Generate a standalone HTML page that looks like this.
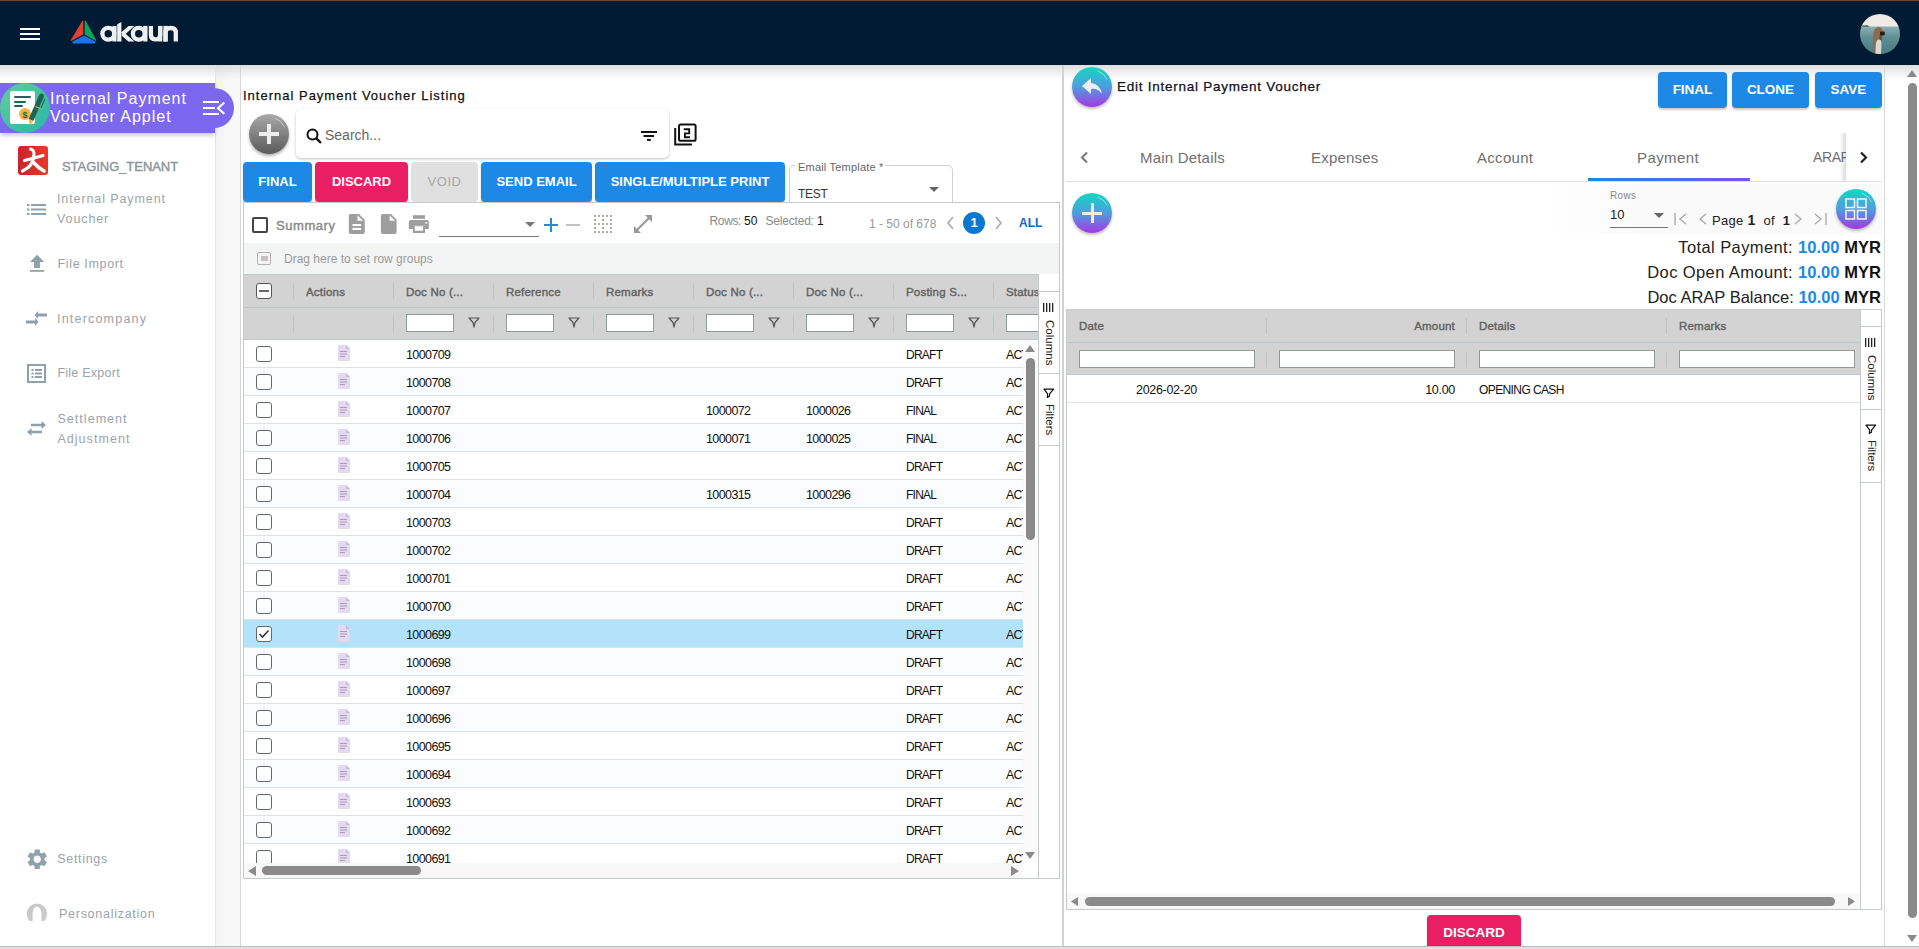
<!DOCTYPE html><html><head><meta charset="utf-8"><style>
*{box-sizing:border-box;margin:0;padding:0}
html,body{width:1919px;height:949px;overflow:hidden;background:#fff;font-family:"Liberation Sans",sans-serif;position:relative}
.a{position:absolute}
.t{position:absolute;white-space:nowrap;line-height:1}
#hdr{left:0;top:0;width:1919px;height:65px;background:#011b34;border-top:1px solid #5e4a3e}
.btn{position:absolute;color:#fff;font-weight:bold;font-size:13px;text-align:center;border-radius:4px;box-shadow:0 2px 2px rgba(0,0,0,.2)}
.blue{background:#1e88e5}
.pink{background:#e91e63}
.side{color:#98a4aa;font-size:12.5px;letter-spacing:0.85px}
.hcell{position:absolute;top:0;height:33px;font-size:12px;font-weight:bold;color:#636363;line-height:33px;padding-left:13px;white-space:nowrap;overflow:hidden}
.sep{position:absolute;width:1px;background:#c3c3c3}
.finp{position:absolute;height:18px;background:#fff;border:1px solid #8f9a9a}
.cell{position:absolute;font-size:12px;color:#000;white-space:nowrap}
.cb{position:absolute;width:16px;height:16px;border:1.5px solid #5f6b6b;border-radius:3px;background:#fff}
</style></head><body><div id="hdr" class="a"></div>
<div class="a" style="left:20px;top:28px;width:20px;height:2px;background:#fff"></div>
<div class="a" style="left:20px;top:33px;width:20px;height:2px;background:#fff"></div>
<div class="a" style="left:20px;top:38px;width:20px;height:2px;background:#fff"></div>
<svg class="a" style="left:0;top:0" width="200" height="60" viewBox="0 0 200 60"><path d="M82.2 21 Q83 20 83.3 21.5 L83.3 34.6 L71.2 41 Q70.2 41.2 70.8 40 Z" fill="#de4131"/><path d="M84.6 21.5 Q85 20 85.8 21 L96.2 40 Q96.6 41 95.6 40.8 L84.6 34.6 Z" fill="#0ea35a"/><path d="M84 35.5 L95.4 41.6 Q96 42.6 94.8 43.4 L73 43.4 Q71.6 42.6 72.6 41.6 Z" fill="#1c72ec"/><g fill="#f0f0f0"><circle cx="108.3" cy="33.8" r="5.9" fill="none" stroke="#f0f0f0" stroke-width="4.3"/><rect x="112.4" y="25.9" width="4.2" height="15.6"/><path d="M117.2 24.3 L121.4 21.9 L121.4 41.5 L117.2 41.5Z"/><path d="M121 32.6 L128.6 25.9 L134.4 25.9 L124 35.6 Z"/><path d="M123.8 32.2 L134.4 41.5 L128.4 41.5 L121.2 35.2 Z"/><circle cx="138.8" cy="33.8" r="5.9" fill="none" stroke="#f0f0f0" stroke-width="4.3"/><rect x="143.2" y="25.9" width="4.3" height="15.6"/><path d="M150.9 25.9 V34.8 Q150.9 39.4 155.4 39.4 Q160 39.4 160.2 34.8 V25.9" fill="none" stroke="#f0f0f0" stroke-width="4.3"/><rect x="158" y="25.9" width="4.3" height="15.6"/><rect x="163.4" y="25.9" width="4.3" height="15.6"/><path d="M165.5 41.5 V32.6 Q165.5 28 170.8 28 Q175.8 28 175.8 32.6 V41.5" fill="none" stroke="#f0f0f0" stroke-width="4.3"/></g></svg>
<svg class="a" style="left:1860px;top:14px" width="40" height="40" viewBox="0 0 40 40"><defs><clipPath id="av"><circle cx="20" cy="20" r="20"/></clipPath><linearGradient id="sea" x1="0" y1="0" x2="0" y2="1"><stop offset="0" stop-color="#8fb0b3"/><stop offset="0.4" stop-color="#5f8e94"/><stop offset="1" stop-color="#4a7b82"/></linearGradient></defs><g clip-path="url(#av)"><rect x="0" y="0" width="40" height="13" fill="#efebe6"/><rect x="0" y="12.5" width="40" height="28" fill="url(#sea)"/><path d="M1 12.8 L3 11.2 L5 11.5 L7 10.9 L9.5 12.8Z" fill="#3d5b4a"/><path d="M14 40 L13.2 30 Q12.5 22 14 17 Q15.5 12.8 19 13 Q22.5 13.6 22.6 17.5 L22 26 L19 40Z" fill="#8d6c4c"/><path d="M15.5 40 L15.8 30 Q16.5 25.5 19.5 25 Q21.5 26 21.5 31 L21 40Z" fill="#dcd8d2"/><rect x="20" y="17.5" width="4.8" height="4" rx="1" fill="#222"/><path d="M19.5 21 L21.5 21 L21.5 26 L19.5 26Z" fill="#5d4b3c"/></g></svg>
<div class="a" style="left:0;top:65px;width:1919px;height:14px;background:linear-gradient(rgba(0,0,0,.13),rgba(0,0,0,0))"></div>
<div class="a" style="left:215px;top:65px;width:1px;height:884px;background:#e4e4e4"></div>
<div class="a" style="left:216px;top:65px;width:24px;height:884px;background:linear-gradient(90deg,#f4f4f4,#fafafa)"></div>
<div class="a" style="left:240px;top:65px;width:1px;height:884px;background:#d6d6d6"></div>
<div class="a" style="left:216px;top:65px;width:24px;height:14px;background:linear-gradient(rgba(0,0,0,.1),rgba(0,0,0,0))"></div>
<div class="a" style="left:0;top:83px;width:215px;height:50px;background:#7b68ee;box-shadow:0 3px 4px rgba(0,0,0,.18)"></div>
<div class="a" style="left:194px;top:88px;width:40px;height:40px;border-radius:50%;background:#7b68ee"></div>
<div class="a" style="left:203px;top:101.3px;width:16px;height:2.1px;background:#fff"></div>
<div class="a" style="left:203px;top:107.2px;width:12px;height:2.1px;background:#fff"></div>
<div class="a" style="left:203px;top:113px;width:16px;height:2.1px;background:#fff"></div>
<svg class="a" style="left:216px;top:101px" width="10" height="14"><path d="M8.3 1.5 L2 7.2 L8.3 12.8" stroke="#fff" stroke-width="2.2" fill="none"/></svg>
<div class="a" style="left:0;top:83px;width:50px;height:50px;border-radius:50%;background:linear-gradient(135deg,#5fcf98,#2ab5a8)"></div>
<svg class="a" style="left:8px;top:91px" width="38" height="36" viewBox="0 0 38 36">
<rect x="2" y="0" width="25" height="33" rx="2" fill="#fff"/>
<rect x="6" y="5" width="17" height="2" rx="1" fill="#1d6356"/><rect x="6" y="10" width="12" height="2" rx="1" fill="#1d6356"/><rect x="6" y="14" width="9" height="2" rx="1" fill="#1d6356"/>
<circle cx="17" cy="23" r="6" fill="#f6b43c"/><text x="14.5" y="26.5" font-size="9" font-weight="bold" fill="#1d6356" font-family="Liberation Sans">$</text>
<path d="M31.2 4.06 L35.8 5.94 L25.3 29.94 L20.7 28.06 Z" fill="#1d6356"/><circle cx="33.5" cy="5" r="2.4" fill="#1d6356"/><path d="M20.7 28.06 L25.3 29.94 L21.8 34.5 Z" fill="#f6b43c"/><path d="M27.6 15 L32.2 16.9 L31.8 17.8 L27.2 15.9Z" fill="#f6b43c"/><path d="M36.5 7.5 L37.5 8 L33.5 17 L32.6 16.6Z" fill="#1d6356"/></svg>
<div class="t" style="left:50px;top:90px;font-size:16px;color:#fff;letter-spacing:1px;line-height:18px">Internal Payment<br>Voucher Applet</div>
<div class="a" style="left:18px;top:146px;width:30px;height:29px;border-radius:3px;background:linear-gradient(90deg,#c9232b,#e8392a)">
<svg width="30" height="29" viewBox="0 0 30 29" fill="none" stroke="#fff" stroke-linecap="round"><path d="M12.5 3 Q16.5 4 16 9" stroke-width="3"/><path d="M6.5 14.5 Q15 12.5 25 9.5" stroke-width="3.2"/><path d="M15.5 10 Q15.5 20 4.5 25" stroke-width="3.2"/><path d="M15.5 16.5 Q20 21.5 26 25" stroke-width="3.6"/></svg></div>
<div class="t" style="left:62px;top:160px;font-size:13px;color:#8a969a;letter-spacing:-0.05px;-webkit-text-stroke:0.4px #8a969a">STAGING_TENANT</div>
<svg class="a" style="left:27px;top:204px" width="20" height="11" viewBox="0 0 20 11">
<rect x="0" y="0" width="2.5" height="2" fill="#8fa1ab"/><rect x="4" y="0" width="15" height="2" fill="#8fa1ab"/>
<rect x="0" y="4.5" width="2.5" height="2" fill="#8fa1ab"/><rect x="4" y="4.5" width="15" height="2" fill="#8fa1ab"/>
<rect x="0" y="9" width="2.5" height="2" fill="#8fa1ab"/><rect x="4" y="9" width="15" height="2" fill="#8fa1ab"/></svg>
<div class="t side" style="left:57px;top:188.5px;line-height:20px;letter-spacing:0.9px">Internal Payment<br>Voucher</div>
<svg class="a" style="left:0;top:250px" width="50" height="25" viewBox="0 250 50 25"><path d="M37.1 254.8 L44.2 262 L40.1 262 L40.1 268 L34 268 L34 262 L30 262 Z" fill="#8fa1ab"/><rect x="30" y="270" width="14.2" height="1.8" fill="#8fa1ab"/></svg>
<div class="t side" style="left:57.5px;top:257.5px;letter-spacing:0.65px">File Import</div>
<svg class="a" style="left:26px;top:311px" width="21" height="15" viewBox="0 0 21 15">
<path d="M0 9.5 L9 9.5 L9 7 L12.5 11 L9 15 L9 12.5 L0 12.5Z" fill="#8fa1ab"/>
<path d="M21 2.5 L12 2.5 L12 0 L8.5 4 L12 8 L12 5.5 L21 5.5Z" fill="#8fa1ab"/></svg>
<div class="t side" style="left:57px;top:312.7px;letter-spacing:1.2px">Intercompany</div>
<svg class="a" style="left:27px;top:364px" width="19" height="19" viewBox="0 0 19 19">
<rect x="1" y="1" width="17" height="17" fill="none" stroke="#8fa1ab" stroke-width="2"/>
<rect x="4.5" y="5" width="2" height="2" fill="#8fa1ab"/><rect x="8" y="5" width="7" height="2" fill="#8fa1ab"/>
<rect x="4.5" y="8.5" width="2" height="2" fill="#8fa1ab"/><rect x="8" y="8.5" width="7" height="2" fill="#8fa1ab"/>
<rect x="4.5" y="12" width="2" height="2" fill="#8fa1ab"/><rect x="8" y="12" width="7" height="2" fill="#8fa1ab"/></svg>
<div class="t side" style="left:57.4px;top:367.4px;letter-spacing:0.25px">File Export</div>
<svg class="a" style="left:27px;top:421px" width="19" height="15" viewBox="0 0 19 15">
<path d="M19 4 L14.5 0 L14.5 2.8 L4 2.8 L4 5.2 L14.5 5.2 L14.5 8 Z" fill="#8fa1ab"/>
<path d="M0 11 L4.5 7 L4.5 9.8 L15 9.8 L15 12.2 L4.5 12.2 L4.5 15 Z" fill="#8fa1ab"/></svg>
<div class="t side" style="left:57.4px;top:408.7px;line-height:20px;letter-spacing:1.05px">Settlement<br>Adjustment</div>
<svg class="a" style="left:24.7px;top:846.8px" width="24.5" height="24.5" viewBox="0 0 24 24">
<path fill="#8fa1ab" d="M19.14 12.94c.04-.3.06-.61.06-.94 0-.32-.02-.64-.07-.94l2.03-1.58c.18-.14.23-.41.12-.61l-1.92-3.32c-.12-.22-.37-.29-.59-.22l-2.39.96c-.5-.38-1.03-.7-1.62-.94l-.36-2.54c-.04-.24-.24-.41-.48-.41h-3.84c-.24 0-.43.17-.47.41l-.36 2.54c-.59.24-1.13.57-1.62.94l-2.39-.96c-.22-.08-.47 0-.59.22L2.74 8.87c-.12.21-.08.47.12.61l2.03 1.58c-.05.3-.09.63-.09.94s.02.64.07.94l-2.03 1.58c-.18.14-.23.41-.12.61l1.92 3.32c.12.22.37.29.59.22l2.39-.96c.5.38 1.030.7 1.62.94l.36 2.54c.05.24.24.41.48.41h3.84c.24 0 .44-.17.47-.41l.36-2.54c.59-.24 1.13-.56 1.62-.94l2.39.96c.22.08.47 0 .59-.22l1.92-3.32c.12-.22.07-.47-.12-.61l-2.01-1.58zM12 15.6c-1.98 0-3.6-1.62-3.6-3.6s1.62-3.6 3.6-3.6 3.6 1.62 3.6 3.6-1.62 3.6-3.6 3.6z"/></svg>
<div class="t side" style="left:57.2px;top:852.7px;letter-spacing:0.7px">Settings</div>
<svg class="a" style="left:26px;top:902px" width="22" height="21" viewBox="0 0 22 21"><circle cx="10.9" cy="11.8" r="10.2" fill="#c9c9c9"/><ellipse cx="11" cy="12" rx="4.4" ry="7.5" fill="#fff"/><rect x="6.6" y="12" width="8.8" height="10" fill="#fff"/><rect x="0" y="19" width="22" height="3" fill="#fff"/></svg>
<div class="t side" style="left:59px;top:907.8px;letter-spacing:0.73px">Personalization</div>
<div class="t" style="left:243px;top:89px;font-size:13px;color:#111;letter-spacing:1px;-webkit-text-stroke:0.25px #111">Internal Payment Voucher Listing</div>
<div class="a" style="left:249px;top:114px;width:40px;height:40px;border-radius:50%;background:linear-gradient(#a9a9a9,#5a5a5a);box-shadow:0 2px 3px rgba(0,0,0,.3)"></div>
<svg class="a" style="left:249px;top:114px" width="40" height="40"><path d="M25.8 4 A17 17 0 0 1 35.4 12.8" fill="none" stroke="#d8d8d8" stroke-width="0.9" opacity="0.8"/></svg>
<div class="a" style="left:259px;top:132px;width:20px;height:4px;background:#eee"></div>
<div class="a" style="left:267px;top:124px;width:4px;height:20px;background:#eee"></div>
<div class="a" style="left:296px;top:109px;width:373px;height:49px;border-radius:5px;background:#fff;box-shadow:0 1px 3px rgba(0,0,0,.25)"></div>
<svg class="a" style="left:306px;top:128px" width="17" height="16" viewBox="0 0 17 16"><circle cx="6.5" cy="6.5" r="5" fill="none" stroke="#111" stroke-width="2"/><path d="M10.3 10.3 L15 15" stroke="#111" stroke-width="2.4"/></svg>
<div class="t" style="left:325px;top:128px;font-size:14px;color:#666">Search...</div>
<svg class="a" style="left:0;top:0" width="700" height="160" viewBox="0 0 700 160"><rect x="641" y="131" width="16" height="2" fill="#111"/><rect x="643.5" y="135" width="10.5" height="2" fill="#111"/><rect x="647" y="138.9" width="3.8" height="2" fill="#111"/><path d="M675.2 128 V144.5 H692" fill="none" stroke="#111" stroke-width="2"/><rect x="679" y="124.6" width="16.6" height="16.2" rx="1.6" fill="none" stroke="#111" stroke-width="2"/><path d="M683.8 129.2 H689.2 V133.4 H684.9 V137.3 H690" fill="none" stroke="#111" stroke-width="1.9"/></svg>
<div class="btn blue" style="left:243px;top:162px;width:69px;height:40px;line-height:40px">FINAL</div>
<div class="btn pink" style="left:315px;top:162px;width:93px;height:40px;line-height:40px">DISCARD</div>
<div class="btn" style="left:411px;top:162px;width:67px;height:40px;line-height:40px;background:#e0e0e0;color:#a8a8a8;font-weight:normal;letter-spacing:0.5px;box-shadow:none">VOID</div>
<div class="btn blue" style="left:481px;top:162px;width:111px;height:40px;line-height:40px">SEND EMAIL</div>
<div class="btn blue" style="left:595px;top:162px;width:190px;height:40px;line-height:40px">SINGLE/MULTIPLE PRINT</div>
<div class="a" style="left:789px;top:165px;width:164px;height:45px;border:1px solid #d0d0d0;border-radius:5px"></div>
<div class="a" style="left:795px;top:160px;width:90px;height:10px;background:#fff"></div>
<div class="t" style="left:798px;top:162px;font-size:11px;color:#666;letter-spacing:0.2px">Email Template *</div>
<div class="t" style="left:798px;top:188px;font-size:12px;color:#333;letter-spacing:-0.3px">TEST</div>
<svg class="a" style="left:929px;top:187px" width="10" height="5"><path d="M0 0 L10 0 L5 5Z" fill="#666"/></svg>
<div class="a" style="left:243px;top:202px;width:817px;height:677px;border:1px solid #c5cacd;background:#fff"></div>
<div class="a" style="left:252px;top:217px;width:16px;height:16px;border:2px solid #444;border-radius:2px"></div>
<div class="t" style="left:276px;top:219px;font-size:13px;color:#8c8c8c;letter-spacing:0.55px;-webkit-text-stroke:0.45px #8c8c8c">Summary</div>
<svg class="a" style="left:0;top:0" width="440" height="240" viewBox="0 0 440 240"><path d="M350.5 214 L359 214 L364.8 219.8 L364.8 232 Q364.8 234 362.8 234 L350.8 234 Q348.8 234 348.8 232 L348.8 216 Q348.8 214 350.5 214Z" fill="#9e9e9e"/><path d="M357.5 215.3 L357.5 220.8 L363 220.8Z" fill="#fff"/><rect x="352.5" y="224" width="8.6" height="2.1" fill="#fff"/><rect x="352.5" y="227.9" width="8.6" height="2.1" fill="#fff"/><path d="M382.6 214 L391 214 L396.6 219.8 L396.6 232 Q396.6 234 394.6 234 L382.9 234 Q380.9 234 380.9 232 L380.9 216 Q380.9 214 382.6 214Z" fill="#9e9e9e"/><path d="M389.6 215.3 L389.6 220.8 L395 220.8Z" fill="#fff"/><rect x="413" y="215.2" width="12" height="3.6" fill="#9e9e9e"/><path d="M410.8 220.1 L426.8 220.1 Q428.8 220.1 428.8 222.1 L428.8 229 L425 229 L425 225.8 L413 225.8 L413 229 L408.8 229 L408.8 222.1 Q408.8 220.1 410.8 220.1Z" fill="#9e9e9e"/><path d="M413 225.8 L425 225.8 L425 233 L413 233Z M414.8 226.2 L414.8 230.8 L423.1 230.8 L423.1 226.2Z" fill="#9e9e9e" fill-rule="evenodd"/><rect x="425.5" y="222" width="1.6" height="1.8" fill="#fff"/></svg>
<div class="a" style="left:439px;top:236px;width:100px;height:1px;background:#777"></div>
<svg class="a" style="left:525px;top:222px" width="10" height="5"><path d="M0 0 L10 0 L5 5Z" fill="#777"/></svg>
<div class="a" style="left:544px;top:224px;width:14px;height:2px;background:#1e88e5"></div>
<div class="a" style="left:550px;top:218px;width:2px;height:14px;background:#1e88e5"></div>
<div class="a" style="left:566px;top:224px;width:14px;height:2px;background:#c2c2c2"></div>
<svg class="a" style="left:594px;top:215px" width="18" height="18"><rect x="0" y="0" width="2" height="2" fill="#b0a8a0"/><rect x="0" y="4" width="2" height="2" fill="#b0a8a0"/><rect x="0" y="8" width="2" height="2" fill="#b0a8a0"/><rect x="0" y="12" width="2" height="2" fill="#b0a8a0"/><rect x="0" y="16" width="2" height="2" fill="#b0a8a0"/><rect x="4" y="0" width="2" height="2" fill="#b0a8a0"/><rect x="4" y="8" width="2" height="2" fill="#b0a8a0"/><rect x="4" y="16" width="2" height="2" fill="#b0a8a0"/><rect x="8" y="0" width="2" height="2" fill="#b0a8a0"/><rect x="8" y="4" width="2" height="2" fill="#b0a8a0"/><rect x="8" y="8" width="2" height="2" fill="#b0a8a0"/><rect x="8" y="12" width="2" height="2" fill="#b0a8a0"/><rect x="8" y="16" width="2" height="2" fill="#b0a8a0"/><rect x="12" y="0" width="2" height="2" fill="#b0a8a0"/><rect x="12" y="8" width="2" height="2" fill="#b0a8a0"/><rect x="12" y="16" width="2" height="2" fill="#b0a8a0"/><rect x="16" y="0" width="2" height="2" fill="#b0a8a0"/><rect x="16" y="4" width="2" height="2" fill="#b0a8a0"/><rect x="16" y="8" width="2" height="2" fill="#b0a8a0"/><rect x="16" y="12" width="2" height="2" fill="#b0a8a0"/><rect x="16" y="16" width="2" height="2" fill="#b0a8a0"/></svg>
<svg class="a" style="left:633px;top:214px" width="20" height="20" viewBox="0 0 20 20"><path d="M12 1 L19 1 L19 8 Z M1 12 L1 19 L8 19Z" fill="#999"/><path d="M16 4 L4 16" stroke="#999" stroke-width="2.2"/></svg>
<div class="t" style="left:709.5px;top:215px;font-size:12px;color:#8a8a8a;letter-spacing:-0.35px">Rows:</div>
<div class="t" style="left:744px;top:215px;font-size:12px;color:#111">50</div>
<div class="t" style="left:765.5px;top:215px;font-size:12px;color:#8a8a8a;letter-spacing:-0.2px">Selected:</div>
<div class="t" style="left:817px;top:215px;font-size:12px;color:#111">1</div>
<div class="t" style="left:869px;top:218px;font-size:12px;color:#999">1 - 50 of 678</div>
<svg class="a" style="left:946px;top:216px" width="9" height="14"><path d="M7 1 L2 7 L7 13" stroke="#aaa" stroke-width="1.6" fill="none"/></svg>
<div class="a" style="left:963px;top:212px;width:22px;height:22px;border-radius:50%;background:#0a78cf;color:#fff;font-size:13px;font-weight:bold;text-align:center;line-height:22px">1</div>
<svg class="a" style="left:994px;top:216px" width="9" height="14"><path d="M2 1 L7 7 L2 13" stroke="#aaa" stroke-width="1.6" fill="none"/></svg>
<div class="t" style="left:1019px;top:217px;font-size:12px;font-weight:bold;color:#1565c0">ALL</div>
<div class="a" style="left:244px;top:243px;width:815px;height:32px;background:#f3f5f5;border-bottom:1px solid #c5cacd"></div>
<div class="a" style="left:257px;top:252px;width:14px;height:13px;border:1px solid #b8b0b0;border-radius:2px"></div>
<div class="a" style="left:261px;top:256px;width:7px;height:5px;background:#c8c0c0"></div>
<div class="t" style="left:284px;top:253px;font-size:12px;color:#9a9a9a">Drag here to set row groups</div>
<div class="a" style="left:244px;top:275px;width:795px;height:64px;background:#d3d3d3"></div>
<div class="a" style="left:244px;top:307px;width:795px;height:1px;background:#bfc6c9"></div>
<div class="a" style="left:244px;top:339px;width:795px;height:1px;background:#bfc6c9"></div>
<div class="cb" style="left:256px;top:283px;border:1.5px solid #555;background:#fff"></div>
<div class="a" style="left:259px;top:290px;width:10px;height:2px;background:#666"></div>
<div class="sep" style="left:293px;top:283px;height:16px"></div>
<div class="sep" style="left:293px;top:316px;height:16px"></div>
<div class="t" style="left:306px;top:287px;font-size:11.5px;color:#626262;-webkit-text-stroke:0.4px #626262;letter-spacing:0.2px;width:87px;overflow:hidden">Actions</div>
<div class="sep" style="left:393px;top:283px;height:16px"></div>
<div class="sep" style="left:393px;top:316px;height:16px"></div>
<div class="t" style="left:406px;top:287px;font-size:11.5px;color:#626262;-webkit-text-stroke:0.4px #626262;letter-spacing:0.2px;width:87px;overflow:hidden">Doc No (...</div>
<div class="finp" style="left:406px;top:314px;width:48px;"></div>
<svg class="a" style="left:468px;top:317px" width="12" height="11" viewBox="0 0 12 11"><path d="M1 1 L11 1 L7 5.5 L6 10 L5 5.5 Z" fill="none" stroke="#555" stroke-width="1.2" stroke-linejoin="round"/></svg>
<div class="sep" style="left:493px;top:283px;height:16px"></div>
<div class="sep" style="left:493px;top:316px;height:16px"></div>
<div class="t" style="left:506px;top:287px;font-size:11.5px;color:#626262;-webkit-text-stroke:0.4px #626262;letter-spacing:0.2px;width:87px;overflow:hidden">Reference</div>
<div class="finp" style="left:506px;top:314px;width:48px;"></div>
<svg class="a" style="left:568px;top:317px" width="12" height="11" viewBox="0 0 12 11"><path d="M1 1 L11 1 L7 5.5 L6 10 L5 5.5 Z" fill="none" stroke="#555" stroke-width="1.2" stroke-linejoin="round"/></svg>
<div class="sep" style="left:593px;top:283px;height:16px"></div>
<div class="sep" style="left:593px;top:316px;height:16px"></div>
<div class="t" style="left:606px;top:287px;font-size:11.5px;color:#626262;-webkit-text-stroke:0.4px #626262;letter-spacing:0.2px;width:87px;overflow:hidden">Remarks</div>
<div class="finp" style="left:606px;top:314px;width:48px;"></div>
<svg class="a" style="left:668px;top:317px" width="12" height="11" viewBox="0 0 12 11"><path d="M1 1 L11 1 L7 5.5 L6 10 L5 5.5 Z" fill="none" stroke="#555" stroke-width="1.2" stroke-linejoin="round"/></svg>
<div class="sep" style="left:693px;top:283px;height:16px"></div>
<div class="sep" style="left:693px;top:316px;height:16px"></div>
<div class="t" style="left:706px;top:287px;font-size:11.5px;color:#626262;-webkit-text-stroke:0.4px #626262;letter-spacing:0.2px;width:87px;overflow:hidden">Doc No (...</div>
<div class="finp" style="left:706px;top:314px;width:48px;"></div>
<svg class="a" style="left:768px;top:317px" width="12" height="11" viewBox="0 0 12 11"><path d="M1 1 L11 1 L7 5.5 L6 10 L5 5.5 Z" fill="none" stroke="#555" stroke-width="1.2" stroke-linejoin="round"/></svg>
<div class="sep" style="left:793px;top:283px;height:16px"></div>
<div class="sep" style="left:793px;top:316px;height:16px"></div>
<div class="t" style="left:806px;top:287px;font-size:11.5px;color:#626262;-webkit-text-stroke:0.4px #626262;letter-spacing:0.2px;width:87px;overflow:hidden">Doc No (...</div>
<div class="finp" style="left:806px;top:314px;width:48px;"></div>
<svg class="a" style="left:868px;top:317px" width="12" height="11" viewBox="0 0 12 11"><path d="M1 1 L11 1 L7 5.5 L6 10 L5 5.5 Z" fill="none" stroke="#555" stroke-width="1.2" stroke-linejoin="round"/></svg>
<div class="sep" style="left:893px;top:283px;height:16px"></div>
<div class="sep" style="left:893px;top:316px;height:16px"></div>
<div class="t" style="left:906px;top:287px;font-size:11.5px;color:#626262;-webkit-text-stroke:0.4px #626262;letter-spacing:0.2px;width:87px;overflow:hidden">Posting S...</div>
<div class="finp" style="left:906px;top:314px;width:48px;"></div>
<svg class="a" style="left:968px;top:317px" width="12" height="11" viewBox="0 0 12 11"><path d="M1 1 L11 1 L7 5.5 L6 10 L5 5.5 Z" fill="none" stroke="#555" stroke-width="1.2" stroke-linejoin="round"/></svg>
<div class="sep" style="left:993px;top:283px;height:16px"></div>
<div class="sep" style="left:993px;top:316px;height:16px"></div>
<div class="t" style="left:1006px;top:287px;font-size:11.5px;color:#626262;-webkit-text-stroke:0.4px #626262;letter-spacing:0.2px;width:33px;overflow:hidden">Status</div>
<div class="finp" style="left:1006px;top:314px;width:33px;border-right:none;"></div>
<div class="a" style="left:244px;top:340px;width:779px;height:523px;overflow:hidden">
<div class="a" style="left:0;top:0px;width:779px;height:28px;background:#fff;border-bottom:1px solid #dde2e5"></div>
<div class="cb" style="left:12px;top:6px;"></div>
<svg class="a" style="left:94px;top:5px" width="12" height="16" viewBox="0 0 12 16"><path d="M0 0 L8 0 L12 4 L12 16 L0 16Z" fill="#e3d9f0"/><path d="M8 0 L8 4 L12 4Z" fill="#c9bcd9"/><rect x="2" y="6" width="7" height="1" fill="#a89cb8"/><rect x="2" y="8.5" width="7" height="1" fill="#a89cb8"/><rect x="2" y="11" width="5" height="1" fill="#a89cb8"/></svg>
<div class="t" style="left:162px;top:9px;font-size:12.5px;letter-spacing:-0.6px;color:#111">1000709</div>
<div class="t" style="left:662px;top:9px;font-size:12px;letter-spacing:-0.75px;color:#111">DRAFT</div>
<div class="t" style="left:762px;top:9px;font-size:12.3px;letter-spacing:-0.8px;color:#111;width:17px;overflow:hidden">ACT</div>
<div class="a" style="left:0;top:28px;width:779px;height:28px;background:#fafcfe;border-bottom:1px solid #dde2e5"></div>
<div class="cb" style="left:12px;top:34px;"></div>
<svg class="a" style="left:94px;top:33px" width="12" height="16" viewBox="0 0 12 16"><path d="M0 0 L8 0 L12 4 L12 16 L0 16Z" fill="#e3d9f0"/><path d="M8 0 L8 4 L12 4Z" fill="#c9bcd9"/><rect x="2" y="6" width="7" height="1" fill="#a89cb8"/><rect x="2" y="8.5" width="7" height="1" fill="#a89cb8"/><rect x="2" y="11" width="5" height="1" fill="#a89cb8"/></svg>
<div class="t" style="left:162px;top:37px;font-size:12.5px;letter-spacing:-0.6px;color:#111">1000708</div>
<div class="t" style="left:662px;top:37px;font-size:12px;letter-spacing:-0.75px;color:#111">DRAFT</div>
<div class="t" style="left:762px;top:37px;font-size:12.3px;letter-spacing:-0.8px;color:#111;width:17px;overflow:hidden">ACT</div>
<div class="a" style="left:0;top:56px;width:779px;height:28px;background:#fff;border-bottom:1px solid #dde2e5"></div>
<div class="cb" style="left:12px;top:62px;"></div>
<svg class="a" style="left:94px;top:61px" width="12" height="16" viewBox="0 0 12 16"><path d="M0 0 L8 0 L12 4 L12 16 L0 16Z" fill="#e3d9f0"/><path d="M8 0 L8 4 L12 4Z" fill="#c9bcd9"/><rect x="2" y="6" width="7" height="1" fill="#a89cb8"/><rect x="2" y="8.5" width="7" height="1" fill="#a89cb8"/><rect x="2" y="11" width="5" height="1" fill="#a89cb8"/></svg>
<div class="t" style="left:162px;top:65px;font-size:12.5px;letter-spacing:-0.6px;color:#111">1000707</div>
<div class="t" style="left:462px;top:65px;font-size:12.5px;letter-spacing:-0.6px;color:#111">1000072</div>
<div class="t" style="left:562px;top:65px;font-size:12.5px;letter-spacing:-0.6px;color:#111">1000026</div>
<div class="t" style="left:662px;top:65px;font-size:12px;letter-spacing:-0.75px;color:#111">FINAL</div>
<div class="t" style="left:762px;top:65px;font-size:12.3px;letter-spacing:-0.8px;color:#111;width:17px;overflow:hidden">ACT</div>
<div class="a" style="left:0;top:84px;width:779px;height:28px;background:#fafcfe;border-bottom:1px solid #dde2e5"></div>
<div class="cb" style="left:12px;top:90px;"></div>
<svg class="a" style="left:94px;top:89px" width="12" height="16" viewBox="0 0 12 16"><path d="M0 0 L8 0 L12 4 L12 16 L0 16Z" fill="#e3d9f0"/><path d="M8 0 L8 4 L12 4Z" fill="#c9bcd9"/><rect x="2" y="6" width="7" height="1" fill="#a89cb8"/><rect x="2" y="8.5" width="7" height="1" fill="#a89cb8"/><rect x="2" y="11" width="5" height="1" fill="#a89cb8"/></svg>
<div class="t" style="left:162px;top:93px;font-size:12.5px;letter-spacing:-0.6px;color:#111">1000706</div>
<div class="t" style="left:462px;top:93px;font-size:12.5px;letter-spacing:-0.6px;color:#111">1000071</div>
<div class="t" style="left:562px;top:93px;font-size:12.5px;letter-spacing:-0.6px;color:#111">1000025</div>
<div class="t" style="left:662px;top:93px;font-size:12px;letter-spacing:-0.75px;color:#111">FINAL</div>
<div class="t" style="left:762px;top:93px;font-size:12.3px;letter-spacing:-0.8px;color:#111;width:17px;overflow:hidden">ACT</div>
<div class="a" style="left:0;top:112px;width:779px;height:28px;background:#fff;border-bottom:1px solid #dde2e5"></div>
<div class="cb" style="left:12px;top:118px;"></div>
<svg class="a" style="left:94px;top:117px" width="12" height="16" viewBox="0 0 12 16"><path d="M0 0 L8 0 L12 4 L12 16 L0 16Z" fill="#e3d9f0"/><path d="M8 0 L8 4 L12 4Z" fill="#c9bcd9"/><rect x="2" y="6" width="7" height="1" fill="#a89cb8"/><rect x="2" y="8.5" width="7" height="1" fill="#a89cb8"/><rect x="2" y="11" width="5" height="1" fill="#a89cb8"/></svg>
<div class="t" style="left:162px;top:121px;font-size:12.5px;letter-spacing:-0.6px;color:#111">1000705</div>
<div class="t" style="left:662px;top:121px;font-size:12px;letter-spacing:-0.75px;color:#111">DRAFT</div>
<div class="t" style="left:762px;top:121px;font-size:12.3px;letter-spacing:-0.8px;color:#111;width:17px;overflow:hidden">ACT</div>
<div class="a" style="left:0;top:140px;width:779px;height:28px;background:#fafcfe;border-bottom:1px solid #dde2e5"></div>
<div class="cb" style="left:12px;top:146px;"></div>
<svg class="a" style="left:94px;top:145px" width="12" height="16" viewBox="0 0 12 16"><path d="M0 0 L8 0 L12 4 L12 16 L0 16Z" fill="#e3d9f0"/><path d="M8 0 L8 4 L12 4Z" fill="#c9bcd9"/><rect x="2" y="6" width="7" height="1" fill="#a89cb8"/><rect x="2" y="8.5" width="7" height="1" fill="#a89cb8"/><rect x="2" y="11" width="5" height="1" fill="#a89cb8"/></svg>
<div class="t" style="left:162px;top:149px;font-size:12.5px;letter-spacing:-0.6px;color:#111">1000704</div>
<div class="t" style="left:462px;top:149px;font-size:12.5px;letter-spacing:-0.6px;color:#111">1000315</div>
<div class="t" style="left:562px;top:149px;font-size:12.5px;letter-spacing:-0.6px;color:#111">1000296</div>
<div class="t" style="left:662px;top:149px;font-size:12px;letter-spacing:-0.75px;color:#111">FINAL</div>
<div class="t" style="left:762px;top:149px;font-size:12.3px;letter-spacing:-0.8px;color:#111;width:17px;overflow:hidden">ACT</div>
<div class="a" style="left:0;top:168px;width:779px;height:28px;background:#fff;border-bottom:1px solid #dde2e5"></div>
<div class="cb" style="left:12px;top:174px;"></div>
<svg class="a" style="left:94px;top:173px" width="12" height="16" viewBox="0 0 12 16"><path d="M0 0 L8 0 L12 4 L12 16 L0 16Z" fill="#e3d9f0"/><path d="M8 0 L8 4 L12 4Z" fill="#c9bcd9"/><rect x="2" y="6" width="7" height="1" fill="#a89cb8"/><rect x="2" y="8.5" width="7" height="1" fill="#a89cb8"/><rect x="2" y="11" width="5" height="1" fill="#a89cb8"/></svg>
<div class="t" style="left:162px;top:177px;font-size:12.5px;letter-spacing:-0.6px;color:#111">1000703</div>
<div class="t" style="left:662px;top:177px;font-size:12px;letter-spacing:-0.75px;color:#111">DRAFT</div>
<div class="t" style="left:762px;top:177px;font-size:12.3px;letter-spacing:-0.8px;color:#111;width:17px;overflow:hidden">ACT</div>
<div class="a" style="left:0;top:196px;width:779px;height:28px;background:#fafcfe;border-bottom:1px solid #dde2e5"></div>
<div class="cb" style="left:12px;top:202px;"></div>
<svg class="a" style="left:94px;top:201px" width="12" height="16" viewBox="0 0 12 16"><path d="M0 0 L8 0 L12 4 L12 16 L0 16Z" fill="#e3d9f0"/><path d="M8 0 L8 4 L12 4Z" fill="#c9bcd9"/><rect x="2" y="6" width="7" height="1" fill="#a89cb8"/><rect x="2" y="8.5" width="7" height="1" fill="#a89cb8"/><rect x="2" y="11" width="5" height="1" fill="#a89cb8"/></svg>
<div class="t" style="left:162px;top:205px;font-size:12.5px;letter-spacing:-0.6px;color:#111">1000702</div>
<div class="t" style="left:662px;top:205px;font-size:12px;letter-spacing:-0.75px;color:#111">DRAFT</div>
<div class="t" style="left:762px;top:205px;font-size:12.3px;letter-spacing:-0.8px;color:#111;width:17px;overflow:hidden">ACT</div>
<div class="a" style="left:0;top:224px;width:779px;height:28px;background:#fff;border-bottom:1px solid #dde2e5"></div>
<div class="cb" style="left:12px;top:230px;"></div>
<svg class="a" style="left:94px;top:229px" width="12" height="16" viewBox="0 0 12 16"><path d="M0 0 L8 0 L12 4 L12 16 L0 16Z" fill="#e3d9f0"/><path d="M8 0 L8 4 L12 4Z" fill="#c9bcd9"/><rect x="2" y="6" width="7" height="1" fill="#a89cb8"/><rect x="2" y="8.5" width="7" height="1" fill="#a89cb8"/><rect x="2" y="11" width="5" height="1" fill="#a89cb8"/></svg>
<div class="t" style="left:162px;top:233px;font-size:12.5px;letter-spacing:-0.6px;color:#111">1000701</div>
<div class="t" style="left:662px;top:233px;font-size:12px;letter-spacing:-0.75px;color:#111">DRAFT</div>
<div class="t" style="left:762px;top:233px;font-size:12.3px;letter-spacing:-0.8px;color:#111;width:17px;overflow:hidden">ACT</div>
<div class="a" style="left:0;top:252px;width:779px;height:28px;background:#fafcfe;border-bottom:1px solid #dde2e5"></div>
<div class="cb" style="left:12px;top:258px;"></div>
<svg class="a" style="left:94px;top:257px" width="12" height="16" viewBox="0 0 12 16"><path d="M0 0 L8 0 L12 4 L12 16 L0 16Z" fill="#e3d9f0"/><path d="M8 0 L8 4 L12 4Z" fill="#c9bcd9"/><rect x="2" y="6" width="7" height="1" fill="#a89cb8"/><rect x="2" y="8.5" width="7" height="1" fill="#a89cb8"/><rect x="2" y="11" width="5" height="1" fill="#a89cb8"/></svg>
<div class="t" style="left:162px;top:261px;font-size:12.5px;letter-spacing:-0.6px;color:#111">1000700</div>
<div class="t" style="left:662px;top:261px;font-size:12px;letter-spacing:-0.75px;color:#111">DRAFT</div>
<div class="t" style="left:762px;top:261px;font-size:12.3px;letter-spacing:-0.8px;color:#111;width:17px;overflow:hidden">ACT</div>
<div class="a" style="left:0;top:280px;width:779px;height:28px;background:#b3e3fb;border-bottom:1px solid #dde2e5"></div>
<div class="cb" style="left:12px;top:286px;"></div>
<svg class="a" style="left:14px;top:289px" width="12" height="10"><path d="M1.5 5 L4.5 8 L10.5 1.5" stroke="#333" stroke-width="1.6" fill="none"/></svg>
<svg class="a" style="left:94px;top:285px" width="12" height="16" viewBox="0 0 12 16"><path d="M0 0 L8 0 L12 4 L12 16 L0 16Z" fill="#e3d9f0"/><path d="M8 0 L8 4 L12 4Z" fill="#c9bcd9"/><rect x="2" y="6" width="7" height="1" fill="#a89cb8"/><rect x="2" y="8.5" width="7" height="1" fill="#a89cb8"/><rect x="2" y="11" width="5" height="1" fill="#a89cb8"/></svg>
<div class="t" style="left:162px;top:289px;font-size:12.5px;letter-spacing:-0.6px;color:#111">1000699</div>
<div class="t" style="left:662px;top:289px;font-size:12px;letter-spacing:-0.75px;color:#111">DRAFT</div>
<div class="t" style="left:762px;top:289px;font-size:12.3px;letter-spacing:-0.8px;color:#111;width:17px;overflow:hidden">ACT</div>
<div class="a" style="left:0;top:308px;width:779px;height:28px;background:#fafcfe;border-bottom:1px solid #dde2e5"></div>
<div class="cb" style="left:12px;top:314px;"></div>
<svg class="a" style="left:94px;top:313px" width="12" height="16" viewBox="0 0 12 16"><path d="M0 0 L8 0 L12 4 L12 16 L0 16Z" fill="#e3d9f0"/><path d="M8 0 L8 4 L12 4Z" fill="#c9bcd9"/><rect x="2" y="6" width="7" height="1" fill="#a89cb8"/><rect x="2" y="8.5" width="7" height="1" fill="#a89cb8"/><rect x="2" y="11" width="5" height="1" fill="#a89cb8"/></svg>
<div class="t" style="left:162px;top:317px;font-size:12.5px;letter-spacing:-0.6px;color:#111">1000698</div>
<div class="t" style="left:662px;top:317px;font-size:12px;letter-spacing:-0.75px;color:#111">DRAFT</div>
<div class="t" style="left:762px;top:317px;font-size:12.3px;letter-spacing:-0.8px;color:#111;width:17px;overflow:hidden">ACT</div>
<div class="a" style="left:0;top:336px;width:779px;height:28px;background:#fff;border-bottom:1px solid #dde2e5"></div>
<div class="cb" style="left:12px;top:342px;"></div>
<svg class="a" style="left:94px;top:341px" width="12" height="16" viewBox="0 0 12 16"><path d="M0 0 L8 0 L12 4 L12 16 L0 16Z" fill="#e3d9f0"/><path d="M8 0 L8 4 L12 4Z" fill="#c9bcd9"/><rect x="2" y="6" width="7" height="1" fill="#a89cb8"/><rect x="2" y="8.5" width="7" height="1" fill="#a89cb8"/><rect x="2" y="11" width="5" height="1" fill="#a89cb8"/></svg>
<div class="t" style="left:162px;top:345px;font-size:12.5px;letter-spacing:-0.6px;color:#111">1000697</div>
<div class="t" style="left:662px;top:345px;font-size:12px;letter-spacing:-0.75px;color:#111">DRAFT</div>
<div class="t" style="left:762px;top:345px;font-size:12.3px;letter-spacing:-0.8px;color:#111;width:17px;overflow:hidden">ACT</div>
<div class="a" style="left:0;top:364px;width:779px;height:28px;background:#fafcfe;border-bottom:1px solid #dde2e5"></div>
<div class="cb" style="left:12px;top:370px;"></div>
<svg class="a" style="left:94px;top:369px" width="12" height="16" viewBox="0 0 12 16"><path d="M0 0 L8 0 L12 4 L12 16 L0 16Z" fill="#e3d9f0"/><path d="M8 0 L8 4 L12 4Z" fill="#c9bcd9"/><rect x="2" y="6" width="7" height="1" fill="#a89cb8"/><rect x="2" y="8.5" width="7" height="1" fill="#a89cb8"/><rect x="2" y="11" width="5" height="1" fill="#a89cb8"/></svg>
<div class="t" style="left:162px;top:373px;font-size:12.5px;letter-spacing:-0.6px;color:#111">1000696</div>
<div class="t" style="left:662px;top:373px;font-size:12px;letter-spacing:-0.75px;color:#111">DRAFT</div>
<div class="t" style="left:762px;top:373px;font-size:12.3px;letter-spacing:-0.8px;color:#111;width:17px;overflow:hidden">ACT</div>
<div class="a" style="left:0;top:392px;width:779px;height:28px;background:#fff;border-bottom:1px solid #dde2e5"></div>
<div class="cb" style="left:12px;top:398px;"></div>
<svg class="a" style="left:94px;top:397px" width="12" height="16" viewBox="0 0 12 16"><path d="M0 0 L8 0 L12 4 L12 16 L0 16Z" fill="#e3d9f0"/><path d="M8 0 L8 4 L12 4Z" fill="#c9bcd9"/><rect x="2" y="6" width="7" height="1" fill="#a89cb8"/><rect x="2" y="8.5" width="7" height="1" fill="#a89cb8"/><rect x="2" y="11" width="5" height="1" fill="#a89cb8"/></svg>
<div class="t" style="left:162px;top:401px;font-size:12.5px;letter-spacing:-0.6px;color:#111">1000695</div>
<div class="t" style="left:662px;top:401px;font-size:12px;letter-spacing:-0.75px;color:#111">DRAFT</div>
<div class="t" style="left:762px;top:401px;font-size:12.3px;letter-spacing:-0.8px;color:#111;width:17px;overflow:hidden">ACT</div>
<div class="a" style="left:0;top:420px;width:779px;height:28px;background:#fafcfe;border-bottom:1px solid #dde2e5"></div>
<div class="cb" style="left:12px;top:426px;"></div>
<svg class="a" style="left:94px;top:425px" width="12" height="16" viewBox="0 0 12 16"><path d="M0 0 L8 0 L12 4 L12 16 L0 16Z" fill="#e3d9f0"/><path d="M8 0 L8 4 L12 4Z" fill="#c9bcd9"/><rect x="2" y="6" width="7" height="1" fill="#a89cb8"/><rect x="2" y="8.5" width="7" height="1" fill="#a89cb8"/><rect x="2" y="11" width="5" height="1" fill="#a89cb8"/></svg>
<div class="t" style="left:162px;top:429px;font-size:12.5px;letter-spacing:-0.6px;color:#111">1000694</div>
<div class="t" style="left:662px;top:429px;font-size:12px;letter-spacing:-0.75px;color:#111">DRAFT</div>
<div class="t" style="left:762px;top:429px;font-size:12.3px;letter-spacing:-0.8px;color:#111;width:17px;overflow:hidden">ACT</div>
<div class="a" style="left:0;top:448px;width:779px;height:28px;background:#fff;border-bottom:1px solid #dde2e5"></div>
<div class="cb" style="left:12px;top:454px;"></div>
<svg class="a" style="left:94px;top:453px" width="12" height="16" viewBox="0 0 12 16"><path d="M0 0 L8 0 L12 4 L12 16 L0 16Z" fill="#e3d9f0"/><path d="M8 0 L8 4 L12 4Z" fill="#c9bcd9"/><rect x="2" y="6" width="7" height="1" fill="#a89cb8"/><rect x="2" y="8.5" width="7" height="1" fill="#a89cb8"/><rect x="2" y="11" width="5" height="1" fill="#a89cb8"/></svg>
<div class="t" style="left:162px;top:457px;font-size:12.5px;letter-spacing:-0.6px;color:#111">1000693</div>
<div class="t" style="left:662px;top:457px;font-size:12px;letter-spacing:-0.75px;color:#111">DRAFT</div>
<div class="t" style="left:762px;top:457px;font-size:12.3px;letter-spacing:-0.8px;color:#111;width:17px;overflow:hidden">ACT</div>
<div class="a" style="left:0;top:476px;width:779px;height:28px;background:#fafcfe;border-bottom:1px solid #dde2e5"></div>
<div class="cb" style="left:12px;top:482px;"></div>
<svg class="a" style="left:94px;top:481px" width="12" height="16" viewBox="0 0 12 16"><path d="M0 0 L8 0 L12 4 L12 16 L0 16Z" fill="#e3d9f0"/><path d="M8 0 L8 4 L12 4Z" fill="#c9bcd9"/><rect x="2" y="6" width="7" height="1" fill="#a89cb8"/><rect x="2" y="8.5" width="7" height="1" fill="#a89cb8"/><rect x="2" y="11" width="5" height="1" fill="#a89cb8"/></svg>
<div class="t" style="left:162px;top:485px;font-size:12.5px;letter-spacing:-0.6px;color:#111">1000692</div>
<div class="t" style="left:662px;top:485px;font-size:12px;letter-spacing:-0.75px;color:#111">DRAFT</div>
<div class="t" style="left:762px;top:485px;font-size:12.3px;letter-spacing:-0.8px;color:#111;width:17px;overflow:hidden">ACT</div>
<div class="a" style="left:0;top:504px;width:779px;height:28px;background:#fff;border-bottom:1px solid #dde2e5"></div>
<div class="cb" style="left:12px;top:510px;"></div>
<svg class="a" style="left:94px;top:509px" width="12" height="16" viewBox="0 0 12 16"><path d="M0 0 L8 0 L12 4 L12 16 L0 16Z" fill="#e3d9f0"/><path d="M8 0 L8 4 L12 4Z" fill="#c9bcd9"/><rect x="2" y="6" width="7" height="1" fill="#a89cb8"/><rect x="2" y="8.5" width="7" height="1" fill="#a89cb8"/><rect x="2" y="11" width="5" height="1" fill="#a89cb8"/></svg>
<div class="t" style="left:162px;top:513px;font-size:12.5px;letter-spacing:-0.6px;color:#111">1000691</div>
<div class="t" style="left:662px;top:513px;font-size:12px;letter-spacing:-0.75px;color:#111">DRAFT</div>
<div class="t" style="left:762px;top:513px;font-size:12.3px;letter-spacing:-0.8px;color:#111;width:17px;overflow:hidden">ACT</div>
</div>
<div class="a" style="left:1023px;top:340px;width:15px;height:523px;background:#fafafa"></div>
<svg class="a" style="left:1025px;top:345px" width="10" height="7"><path d="M0 7 L5 0 L10 7Z" fill="#8a8a8a"/></svg>
<div class="a" style="left:1026px;top:358px;width:9px;height:182px;border-radius:5px;background:#8a8a8a"></div>
<svg class="a" style="left:1025px;top:852px" width="10" height="7"><path d="M0 0 L10 0 L5 7Z" fill="#8a8a8a"/></svg>
<div class="a" style="left:244px;top:863px;width:779px;height:15px;background:#f8f8f8"></div>
<svg class="a" style="left:248px;top:866px" width="8" height="10"><path d="M8 0 L0 5 L8 10Z" fill="#8a8a8a"/></svg>
<div class="a" style="left:262px;top:866px;width:159px;height:9px;border-radius:5px;background:#8a8a8a"></div>
<svg class="a" style="left:1011px;top:866px" width="8" height="10"><path d="M0 0 L8 5 L0 10Z" fill="#8a8a8a"/></svg>
<div class="a" style="left:1038px;top:274px;width:1px;height:604px;background:#c5cacd"></div>
<div class="a" style="left:1039px;top:274px;width:20px;height:604px;background:#fff"></div>
<div class="a" style="left:1039px;top:291px;width:20px;height:1px;background:#c5cacd"></div>
<div class="a" style="left:1039px;top:373px;width:20px;height:1px;background:#c5cacd"></div>
<div class="a" style="left:1039px;top:445px;width:20px;height:1px;background:#c5cacd"></div>
<svg class="a" style="left:1043px;top:303px" width="11" height="9"><rect x="0" y="0" width="1.3" height="9" fill="#222"/><rect x="3" y="0" width="1.3" height="9" fill="#222"/><rect x="6" y="0" width="1.3" height="9" fill="#222"/><rect x="9" y="0" width="1.3" height="9" fill="#222"/></svg>
<div class="t" style="left:1055px;top:320px;font-size:11.5px;color:#222;transform-origin:0 0;transform:rotate(90deg)">Columns</div>
<svg class="a" style="left:1043.2px;top:388.2px" width="12" height="10" viewBox="0 0 12 10"><path d="M1 1.2 H10.6 L6.6 5.8 L6.4 8.2 L4.4 9.4 L4.6 5.8 Z" fill="none" stroke="#111" stroke-width="1.25" stroke-linejoin="round"/></svg>
<div class="t" style="left:1055px;top:404px;font-size:11.5px;color:#222;transform-origin:0 0;transform:rotate(90deg)">Filters</div>
<div class="a" style="left:1062px;top:65px;width:2px;height:881px;background:#d2d2d2"></div>
<div class="a" style="left:1884px;top:65px;width:1px;height:881px;background:#d8d8d8"></div>
<div class="a" style="left:1072px;top:67px;width:40px;height:40px;border-radius:50%;background:linear-gradient(#12d8c0,#4f9de0 50%,#a637e3);box-shadow:0 2px 3px rgba(0,0,0,.25)"></div>
<svg class="a" style="left:1072px;top:67px" width="40" height="40"><path d="M25.8 4 A17 17 0 0 1 35.4 12.8" fill="none" stroke="#9ff5f0" stroke-width="0.9" opacity="0.8"/></svg>
<svg class="a" style="left:1082px;top:78px" width="21" height="17" viewBox="0 0 21 17"><path d="M9 0 L0 8 L9 16 L9 11 Q16 10 20 16 Q18 6 9 5 Z" fill="#eee"/></svg>
<div class="t" style="left:1117px;top:80px;font-size:13.5px;color:#111122;letter-spacing:0.75px;-webkit-text-stroke:0.25px #111122">Edit Internal Payment Voucher</div>
<div class="btn blue" style="left:1658px;top:72px;width:69px;height:36px;line-height:36px;font-size:13.5px">FINAL</div>
<div class="btn blue" style="left:1732px;top:72px;width:77px;height:36px;line-height:36px;font-size:13.5px">CLONE</div>
<div class="btn blue" style="left:1815px;top:72px;width:67px;height:36px;line-height:36px;font-size:13.5px">SAVE</div>
<div class="a" style="left:1066px;top:181px;width:816px;height:1px;background:#dedede"></div>
<svg class="a" style="left:1079px;top:151px" width="10" height="13"><path d="M8 1.5 L3 6.5 L8 11.5" stroke="#777" stroke-width="2" fill="none"/></svg>
<div class="t" style="left:1140px;top:149.6px;font-size:15px;color:#6f6f6f;letter-spacing:0.2px">Main Details</div>
<div class="t" style="left:1311px;top:149.6px;font-size:15px;color:#6f6f6f;letter-spacing:0.2px">Expenses</div>
<div class="t" style="left:1477px;top:149.6px;font-size:15px;color:#6f6f6f;letter-spacing:0.3px">Account</div>
<div class="t" style="left:1637px;top:149.6px;font-size:15px;color:#6f6f6f;letter-spacing:0.4px">Payment</div>
<div class="t" style="left:1813px;top:149.6px;font-size:14px;color:#6f6f6f;letter-spacing:-0.4px">ARAP</div>
<div class="a" style="left:1588px;top:178px;width:162px;height:3px;background:linear-gradient(90deg,#1e88e5,#7c4dff)"></div>
<div class="a" style="left:1846px;top:133px;width:36px;height:48px;background:#fff"></div><div class="a" style="left:1840px;top:133px;width:6px;height:48px;background:linear-gradient(90deg,rgba(0,0,0,0),rgba(0,0,0,.14))"></div>
<svg class="a" style="left:1859px;top:151px" width="10" height="13"><path d="M2 1.5 L7 6.5 L2 11.5" stroke="#222" stroke-width="2.2" fill="none"/></svg>
<div class="a" style="left:1072px;top:193px;width:40px;height:40px;border-radius:50%;background:linear-gradient(#12d8c0,#4f9de0 50%,#a637e3);box-shadow:0 2px 3px rgba(0,0,0,.25)"></div>
<svg class="a" style="left:1072px;top:193px" width="40" height="40"><path d="M25.8 4 A17 17 0 0 1 35.4 12.8" fill="none" stroke="#9ff5f0" stroke-width="0.9" opacity="0.8"/></svg>
<div class="a" style="left:1082px;top:211.5px;width:20px;height:3px;background:#eee"></div>
<div class="a" style="left:1090.5px;top:203px;width:3px;height:20px;background:#eee"></div>
<div class="a" style="left:1541px;top:184px;width:341px;height:50px;background:linear-gradient(90deg,rgba(250,250,250,0),#fafafa 30%)"></div>
<div class="t" style="left:1610px;top:191px;font-size:10px;color:#888;letter-spacing:0.3px">Rows</div>
<div class="t" style="left:1610px;top:208px;font-size:13px;color:#222">10</div>
<div class="a" style="left:1610px;top:227px;width:58px;height:1px;background:#777"></div>
<svg class="a" style="left:1654px;top:213px" width="10" height="5"><path d="M0 0 L10 0 L5 5Z" fill="#666"/></svg>
<svg class="a" style="left:1674px;top:213px" width="14" height="12" viewBox="0 0 14 12"><path d="M1 0 L1 12" stroke="#aaa" stroke-width="1.4"/><path d="M12 1 L6 6 L12 11" stroke="#aaa" stroke-width="1.4" fill="none"/></svg>
<svg class="a" style="left:1698px;top:213px" width="9" height="12" viewBox="0 0 9 12"><path d="M8 1 L2 6 L8 11" stroke="#aaa" stroke-width="1.4" fill="none"/></svg>
<div class="t" style="left:1712px;top:213px;font-size:13px;color:#222;letter-spacing:0.3px">Page <b style="font-size:14px">1</b>&nbsp;&nbsp;of&nbsp;&nbsp;<b>1</b></div>
<svg class="a" style="left:1794px;top:213px" width="9" height="12" viewBox="0 0 9 12"><path d="M1 1 L7 6 L1 11" stroke="#aaa" stroke-width="1.4" fill="none"/></svg>
<svg class="a" style="left:1813px;top:213px" width="14" height="12" viewBox="0 0 14 12"><path d="M13 0 L13 12" stroke="#aaa" stroke-width="1.4"/><path d="M2 1 L8 6 L2 11" stroke="#aaa" stroke-width="1.4" fill="none"/></svg>
<div class="a" style="left:1836px;top:189px;width:40px;height:40px;border-radius:50%;background:linear-gradient(#12d8c0,#4f9de0 50%,#a637e3);box-shadow:0 2px 3px rgba(0,0,0,.25)"></div>
<svg class="a" style="left:1836px;top:189px" width="40" height="40"><path d="M25.8 4 A17 17 0 0 1 35.4 12.8" fill="none" stroke="#9ff5f0" stroke-width="0.9" opacity="0.8"/></svg>
<svg class="a" style="left:1845px;top:198px" width="22" height="22" viewBox="0 0 22 22"><rect x="1" y="1" width="8.5" height="8.5" fill="none" stroke="#eee" stroke-width="1.6"/><rect x="12.5" y="1" width="8.5" height="8.5" fill="none" stroke="#eee" stroke-width="1.6"/><rect x="1" y="12.5" width="8.5" height="8.5" fill="none" stroke="#eee" stroke-width="1.6"/><rect x="12.5" y="12.5" width="8.5" height="8.5" fill="none" stroke="#eee" stroke-width="1.6"/></svg>
<div class="t" style="right:38px;top:239px;font-size:16.5px;color:#222;letter-spacing:0.4px">Total Payment: <b style="color:#1e88e5;letter-spacing:0">10.00</b> <b style="color:#111;letter-spacing:0">MYR</b></div>
<div class="t" style="right:38px;top:264px;font-size:16.5px;color:#222;letter-spacing:0.4px">Doc Open Amount: <b style="color:#1e88e5;letter-spacing:0">10.00</b> <b style="color:#111;letter-spacing:0">MYR</b></div>
<div class="t" style="right:38px;top:289px;font-size:16.5px;color:#222;letter-spacing:0px">Doc ARAP Balance: <b style="color:#1e88e5;letter-spacing:0">10.00</b> <b style="color:#111;letter-spacing:0">MYR</b></div>
<div class="a" style="left:1066px;top:309px;width:816px;height:601px;border:1px solid #c5cacd;background:#fff"></div>
<div class="a" style="left:1067px;top:310px;width:793px;height:64px;background:#d3d3d3"></div>
<div class="a" style="left:1067px;top:342px;width:793px;height:1px;background:#bfc6c9"></div>
<div class="a" style="left:1067px;top:374px;width:793px;height:1px;background:#bfc6c9"></div>
<div class="t" style="left:1079px;top:321px;font-size:11.5px;color:#626262;-webkit-text-stroke:0.4px #626262;letter-spacing:0.2px">Date</div>
<div class="finp" style="left:1079px;top:350px;width:176px"></div>
<div class="sep" style="left:1266px;top:318px;height:16px"></div>
<div class="sep" style="left:1266px;top:351px;height:16px"></div>
<div class="t" style="left:1279px;top:321px;width:176px;text-align:right;font-size:11.5px;color:#626262;-webkit-text-stroke:0.4px #626262;letter-spacing:0.2px">Amount</div>
<div class="finp" style="left:1279px;top:350px;width:176px"></div>
<div class="sep" style="left:1466px;top:318px;height:16px"></div>
<div class="sep" style="left:1466px;top:351px;height:16px"></div>
<div class="t" style="left:1479px;top:321px;font-size:11.5px;color:#626262;-webkit-text-stroke:0.4px #626262;letter-spacing:0.2px">Details</div>
<div class="finp" style="left:1479px;top:350px;width:176px"></div>
<div class="sep" style="left:1666px;top:318px;height:16px"></div>
<div class="sep" style="left:1666px;top:351px;height:16px"></div>
<div class="t" style="left:1679px;top:321px;font-size:11.5px;color:#626262;-webkit-text-stroke:0.4px #626262;letter-spacing:0.2px">Remarks</div>
<div class="finp" style="left:1679px;top:350px;width:176px"></div>
<div class="a" style="left:1067px;top:375px;width:793px;height:28px;border-bottom:1px solid #dde2e5"></div>
<div class="t" style="left:1136px;top:384px;font-size:12.5px;color:#111;letter-spacing:-0.3px">2026-02-20</div>
<div class="t" style="left:1279px;top:384px;width:176px;text-align:right;font-size:12.5px;color:#111;letter-spacing:-0.3px">10.00</div>
<div class="t" style="left:1479px;top:384px;font-size:12px;color:#111;letter-spacing:-0.6px">OPENING CASH</div>
<div class="a" style="left:1860px;top:310px;width:1px;height:599px;background:#c5cacd"></div>
<div class="a" style="left:1861px;top:326px;width:20px;height:1px;background:#c5cacd"></div>
<div class="a" style="left:1861px;top:409px;width:20px;height:1px;background:#c5cacd"></div>
<div class="a" style="left:1861px;top:482px;width:20px;height:1px;background:#c5cacd"></div>
<svg class="a" style="left:1865px;top:338px" width="11" height="9"><rect x="0" y="0" width="1.3" height="9" fill="#222"/><rect x="3" y="0" width="1.3" height="9" fill="#222"/><rect x="6" y="0" width="1.3" height="9" fill="#222"/><rect x="9" y="0" width="1.3" height="9" fill="#222"/></svg>
<div class="t" style="left:1877px;top:355px;font-size:11.5px;color:#222;transform-origin:0 0;transform:rotate(90deg)">Columns</div>
<svg class="a" style="left:1865.2px;top:423.6px" width="12" height="10" viewBox="0 0 12 10"><path d="M1 1.2 H10.6 L6.6 5.8 L6.4 8.2 L4.4 9.4 L4.6 5.8 Z" fill="none" stroke="#111" stroke-width="1.25" stroke-linejoin="round"/></svg>
<div class="t" style="left:1876.5px;top:440px;font-size:11.5px;color:#222;transform-origin:0 0;transform:rotate(90deg)">Filters</div>
<div class="a" style="left:1067px;top:893px;width:793px;height:16px;background:#f8f8f8"></div>
<svg class="a" style="left:1071px;top:897px" width="7" height="9"><path d="M7 0 L0 4.5 L7 9Z" fill="#8a8a8a"/></svg>
<div class="a" style="left:1085px;top:897px;width:750px;height:9px;border-radius:5px;background:#8a8a8a"></div>
<svg class="a" style="left:1848px;top:897px" width="7" height="9"><path d="M0 0 L7 4.5 L0 9Z" fill="#8a8a8a"/></svg>
<div class="btn pink" style="left:1427px;top:915px;width:94px;height:36px;line-height:36px;font-size:13.5px">DISCARD</div>
<svg class="a" style="left:1907px;top:70px" width="10" height="7"><path d="M0 7 L5 0 L10 7Z" fill="#8a8a8a"/></svg>
<div class="a" style="left:1908px;top:83px;width:9px;height:835px;border-radius:5px;background:#8a8a8a"></div>
<svg class="a" style="left:1907px;top:935px" width="10" height="7"><path d="M0 0 L10 0 L5 7Z" fill="#8a8a8a"/></svg>
<div class="a" style="left:0;top:945.5px;width:1919px;height:1.5px;background:#bdbdbd"></div>
<div class="a" style="left:0;top:947px;width:1919px;height:2px;background:#e8dcdc"></div></body></html>
